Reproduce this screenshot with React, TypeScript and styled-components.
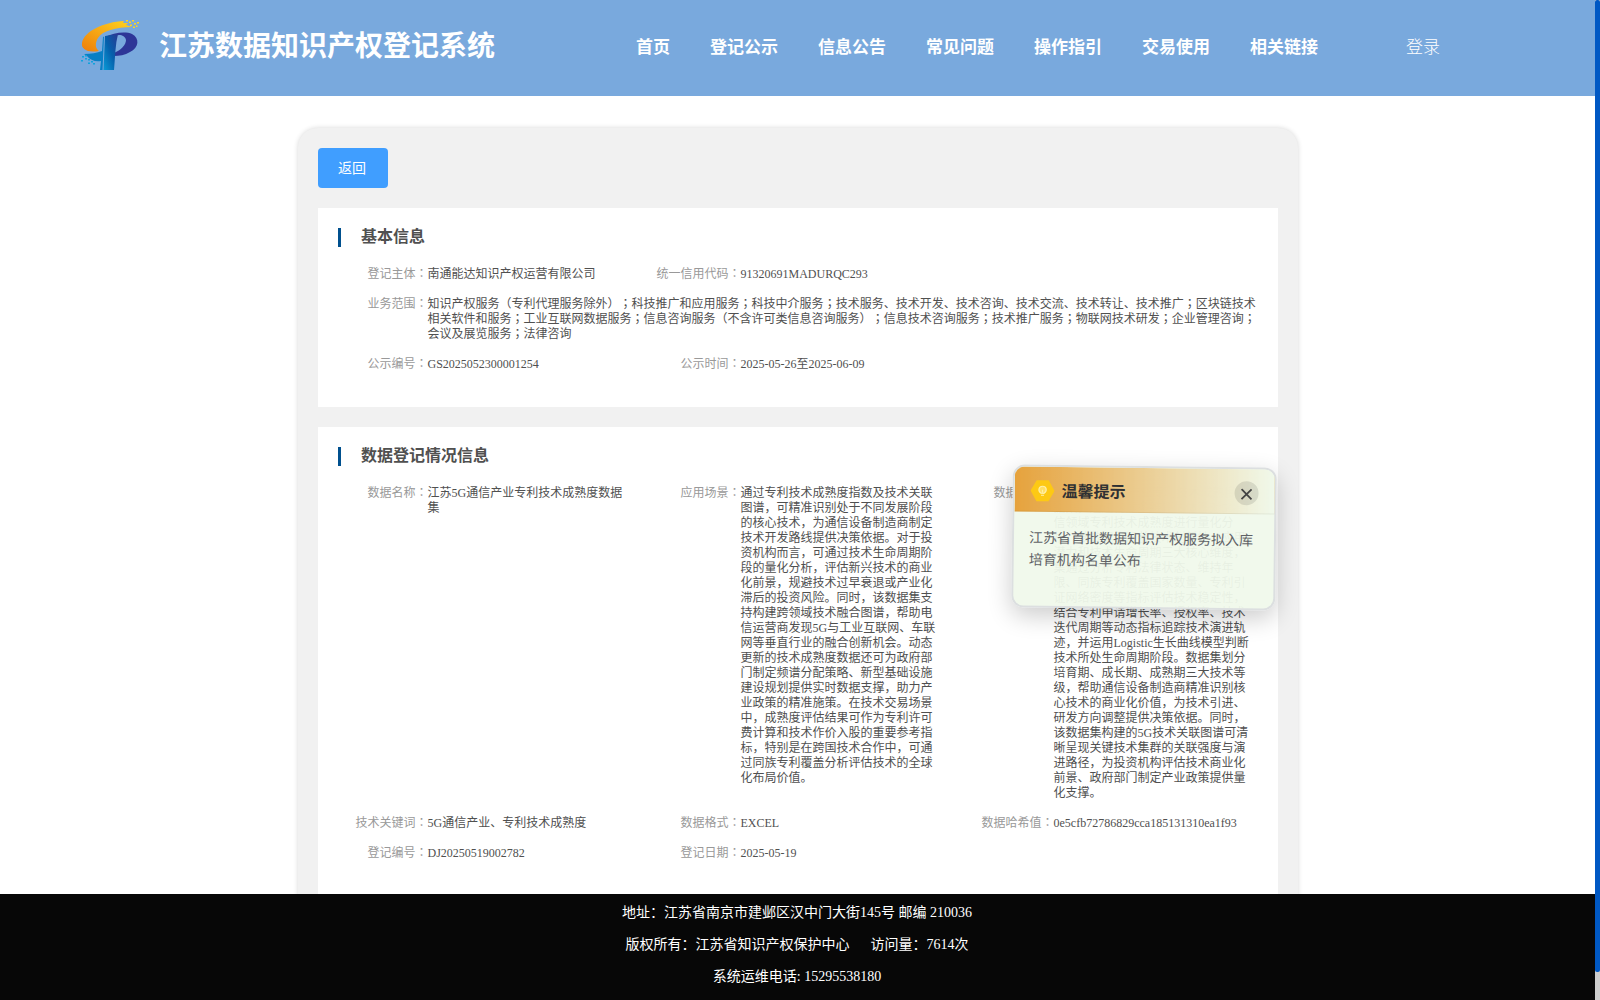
import React from 'react';
import styled, { createGlobalStyle } from 'styled-components';

const Global = createGlobalStyle`
  * { box-sizing: border-box; }
  body {
    margin: 0;
    background: #fff;
    overflow: hidden;
    font-family: "Liberation Serif", "Noto Sans CJK SC", serif;
    text-spacing-trim: space-all;
  }
`;

const Screen = styled.div`
  display: grid;
  grid-template-columns: 1595px 5px;
  width: 1600px;
  height: 1000px;
`;
const Page = styled.div`
  display: grid;
  grid-template-rows: 96px 798px 106px;
  height: 1000px;
`;
const ScrollTrack = styled.div`
  height: 1000px;
  background: #cdcdcd;
`;
const ScrollThumb = styled.div`
  height: 972px;
  border-radius: 2px;
  background: #0058c4;
`;

const Header = styled.header`
  display: flex;
  align-items: center;
  background: #79a9dd;
  color: #fff;
  padding-left: 80px;
`;
const Brand = styled.h1`
  margin: 0 0 3px 19px;
  width: 477px;
  font-size: 28px;
  line-height: 40px;
  font-weight: 600;
`;
const Nav = styled.nav`
  display: flex;
  gap: 40px;
  font-size: 17px;
  line-height: 26px;
  font-weight: 600;
  white-space: nowrap;
`;
const Login = styled.span`
  margin-left: 88px;
  font-size: 17px;
  line-height: 26px;
  font-weight: 300;
`;

const Main = styled.main`
  overflow: hidden;
  padding: 32px 0 0 298px;
`;
const Panel = styled.div`
  width: 1000px;
  height: 900px;
  padding: 20px;
  border-radius: 20px 20px 0 0;
  background: #f1f1f1;
  box-shadow: 0 0 5px rgba(0, 0, 0, 0.16);
`;
const BackButton = styled.button`
  display: block;
  width: 70px;
  height: 40px;
  padding: 0 2px 2px 0;
  border: 0;
  border-radius: 4px;
  background: #409eff;
  color: #fff;
  font: 14px "Liberation Serif", "Noto Sans CJK SC", serif;
`;
const Card = styled.section<{ $h: number }>`
  height: ${(p) => p.$h}px;
  margin-top: 20px;
  padding: 20px 0 0 20px;
  background: #fff;
`;
const CardTitle = styled.h2`
  margin: 0;
  height: 19px;
  padding-left: 20px;
  border-left: 3px solid #00508e;
  color: #505050;
  font-size: 16px;
  line-height: 18px;
  font-weight: 700;
`;
const Fields = styled.div`
  display: grid;
  grid-template-columns: 313px 313px 313px;
  row-gap: 15px;
  margin-top: 20px;
  font-size: 12px;
  line-height: 15px;
`;
const Field = styled.div<{ $wide?: boolean }>`
  display: grid;
  grid-template-columns: 89.5px ${(p) => (p.$wide ? '832px' : '200px')};
  grid-column: ${(p) => (p.$wide ? '1 / -1' : 'auto')};
`;
const Label = styled.span`
  color: #999;
  text-align: right;
  white-space: nowrap;
`;
const Value = styled.span`
  color: #505050;
`;
const Centered = styled.span`
  font-family: "Noto Sans CJK JP", sans-serif;
  line-height: 1;
`;

const Footer = styled.footer`
  background: #070707;
  color: #fff;
  font-size: 14px;
  line-height: 32px;
  text-align: center;
  padding: 3px 1px 0 0;
  white-space: pre;
`;
const FooterLine = styled.div`
  height: 32px;
`;

const Notice = styled.aside`
  position: absolute;
  left: 1012px;
  top: 466px;
  width: 264px;
  height: 143px;
  border: 2px solid #dcdfe0;
  border-radius: 12px;
  overflow: hidden;
  background: rgba(240, 249, 235, 0.95);
  box-shadow: 0 8px 24px rgba(0, 0, 0, 0.2);
  transform: rotate(0.7deg);
`;
const NoticeHead = styled.div`
  display: flex;
  align-items: center;
  height: 45px;
  padding: 3px 16px 0;
  border-bottom: 1px solid rgba(0, 0, 0, 0.06);
  background: linear-gradient(90deg, #e6a23c, rgba(240, 249, 235, 0.9));
`;
const NoticeTitle = styled.strong`
  flex: 1;
  margin: 2px 0 0 7px;
  color: #303133;
  font-size: 16px;
  line-height: 24px;
`;
const Close = styled.span`
  display: grid;
  place-items: center;
  width: 24px;
  height: 24px;
  padding-top: 2px;
  border-radius: 50%;
  background: rgba(0, 0, 0, 0.1);
`;
const NoticeBody = styled.p`
  margin: 0;
  padding: 16px 15px;
  color: #606266;
  font-size: 14px;
  line-height: 22.4px;
`;

function Logo() {
  return (
    <svg width="60" height="60" viewBox="0 0 60 60">
      <defs>
        <linearGradient id="gold" x1="0" y1="1" x2="1" y2="0">
          <stop offset="0" stopColor="#ee7d0b" />
          <stop offset="1" stopColor="#ffd51f" />
        </linearGradient>
        <linearGradient id="stem" x1="0" y1="1" x2="1" y2="0">
          <stop offset="0" stopColor="#0a9ad6" />
          <stop offset="0.5" stopColor="#0560ac" />
          <stop offset="1" stopColor="#283a92" />
        </linearGradient>
      </defs>
      <path d="M19 33C7 35 1 31 2 25C4 13 24 4 44 3L43 5H48L46 7L52 9C36 9 22 13 18 20C15 25 15 30 19 33Z" fill="url(#gold)" />
      <path d="M46 2h2v1.500h-2zM49 3.500h2v1.500h-2zM52 2h2v1.500h-2zM54 5h2v1.500h-2zM50 6.500h2v1.500h-2zM57 4h2v1.500h-2zM53 8.500h2v1.500h-2zM56 7.500h1.500v1.500h-1.500z" fill="#ffd51f" />
      <path d="M25 19C33 15 45 13 52 16C60 20 59 30 50 34C45 37 39 38 34 38V35C41 32 46 27 46 22C45 17 39 16 35 18Z" fill="#2e3697" />
      <path d="M25 18L38 16Q36 24 35.500 32L34 52H23.500Z" fill="url(#stem)" />
      <path d="M24 18.500L22.500 52H20L21 43C15 44 10 42 7 38L4 36C11 36 17 35 22 33L23 19Z" fill="#087fc5" />
      <path d="M2 38h2v1.500h-2zM5 40h2v1.500h-2zM1 42h2v1.500h-2zM8 41h2v1.500h-2zM5 37h2v1.500h-2zM11 43h2v1.500h-2zM8 44.500h2v1.500h-2zM13 45h2v1.500h-2z" fill="#10a2dc" />
    </svg>
  );
}

function Bulb() {
  return (
    <svg width="24" height="24" viewBox="0 0 24 24">
      <path d="M6 1.500h12L24 12l-6 10.500H6L0 12z" fill="#fdc914" />
      <path d="M10.500 14.500C7 12 8 7.500 12 7.500S17 12 13.500 14.500Z" fill="#ffdf65" stroke="#fff0a8" strokeWidth="1.200" />
      <path d="M10.500 16.500h3M12 11v3" stroke="#fff0a8" />
    </svg>
  );
}

/* Colons, semicolons and brackets sit in the middle of their cell. */
function Text({ children }: { children: string }) {
  return (
    <>
      {children.split(/([：；（）])/).map((part, i) =>
        i % 2 ? <Centered key={i}>{part}</Centered> : part,
      )}
    </>
  );
}

function Item({ label, value, wide }: { label: string; value: string; wide?: boolean }) {
  return (
    <Field $wide={wide}>
      <Label><Text>{label + '：'}</Text></Label>
      <Value><Text>{value}</Text></Value>
    </Field>
  );
}

const menu = ['首页', '登记公示', '信息公告', '常见问题', '操作指引', '交易使用', '相关链接'];

const scope =
  '知识产权服务（专利代理服务除外）；科技推广和应用服务；科技中介服务；技术服务、技术开发、技术咨询、技术交流、技术转让、技术推广；区块链技术相关软件和服务；工业互联网数据服务；信息咨询服务（不含许可类信息咨询服务）；信息技术咨询服务；技术推广服务；物联网技术研发；企业管理咨询；会议及展览服务；法律咨询';

const usage =
  '通过专利技术成熟度指数及技术关联图谱，可精准识别处于不同发展阶段的核心技术，为通信设备制造商制定技术开发路线提供决策依据。对于投资机构而言，可通过技术生命周期阶段的量化分析，评估新兴技术的商业化前景，规避技术过早衰退或产业化滞后的投资风险。同时，该数据集支持构建跨领域技术融合图谱，帮助电信运营商发现5G与工业互联网、车联网等垂直行业的融合创新机会。动态更新的技术成熟度数据还可为政府部门制定频谱分配策略、新型基础设施建设规划提供实时数据支撑，助力产业政策的精准施策。在技术交易场景中，成熟度评估结果可作为专利许可费计算和技术作价入股的重要参考指标，特别是在跨国技术合作中，可通过同族专利覆盖分析评估技术的全球化布局价值。';

const summary =
  '江苏省5G通信产业专利技术成熟度数据集，通过构建多维评估体系对5G通信领域专利技术成熟度进行量化分析。该数据集涵盖技术创新性、应用潜力和技术生命周期三大核心维度，集通过分析专利法律状态、维持年限、同族专利覆盖国家数量、专利引证网络密度等指标评估技术稳定性，结合专利申请增长率、授权率、技术迭代周期等动态指标追踪技术演进轨迹，并运用Logistic生长曲线模型判断技术所处生命周期阶段。数据集划分培育期、成长期、成熟期三大技术等级，帮助通信设备制造商精准识别核心技术的商业化价值，为技术引进、研发方向调整提供决策依据。同时，该数据集构建的5G技术关联图谱可清晰呈现关键技术集群的关联强度与演进路径，为投资机构评估技术商业化前景、政府部门制定产业政策提供量化支撑。';

export default function App() {
  return (
    <>
      <Global />
      <Screen>
        <Page>
          <Header>
            <Logo />
            <Brand>江苏数据知识产权登记系统</Brand>
            <Nav>{menu.map((m) => <span key={m}>{m}</span>)}</Nav>
            <Login>登录</Login>
          </Header>
          <Main>
            <Panel>
              <BackButton>返回</BackButton>
              <Card $h={199}>
                <CardTitle>基本信息</CardTitle>
                <Fields>
                  <Item label="登记主体" value="南通能达知识产权运营有限公司" />
                  <Item label="统一信用代码" value="91320691MADURQC293" />
                  <Item wide label="业务范围" value={scope} />
                  <Item label="公示编号" value="GS2025052300001254" />
                  <Item label="公示时间" value="2025-05-26至2025-06-09" />
                </Fields>
              </Card>
              <Card $h={520}>
                <CardTitle>数据登记情况信息</CardTitle>
                <Fields>
                  <Item label="数据名称" value="江苏5G通信产业专利技术成熟度数据集" />
                  <Item label="应用场景" value={usage} />
                  <Item label="数据简介" value={summary} />
                  <Item label="技术关键词" value="5G通信产业、专利技术成熟度" />
                  <Item label="数据格式" value="EXCEL" />
                  <Item label="数据哈希值" value="0e5cfb72786829cca185131310ea1f93" />
                  <Item label="登记编号" value="DJ20250519002782" />
                  <Item label="登记日期" value="2025-05-19" />
                </Fields>
              </Card>
            </Panel>
          </Main>
          <Footer>
            <FooterLine>地址：江苏省南京市建邺区汉中门大街145号 邮编 210036</FooterLine>
            <FooterLine>{'版权所有：江苏省知识产权保护中心\u00a0\u00a0\u00a0\u00a0\u00a0 访问量：7614次'}</FooterLine>
            <FooterLine>系统运维电话: 15295538180</FooterLine>
          </Footer>
        </Page>
        <ScrollTrack><ScrollThumb /></ScrollTrack>
      </Screen>
      <Notice>
        <NoticeHead>
          <Bulb />
          <NoticeTitle>温馨提示</NoticeTitle>
          <Close>
            <svg width="12" height="12" viewBox="0 0 12 12"><path d="M1 1l10 10M11 1L1 11" stroke="#444" strokeWidth="1.800" /></svg>
          </Close>
        </NoticeHead>
        <NoticeBody>江苏省首批数据知识产权服务拟入库培育机构名单公布</NoticeBody>
      </Notice>
    </>
  );
}
